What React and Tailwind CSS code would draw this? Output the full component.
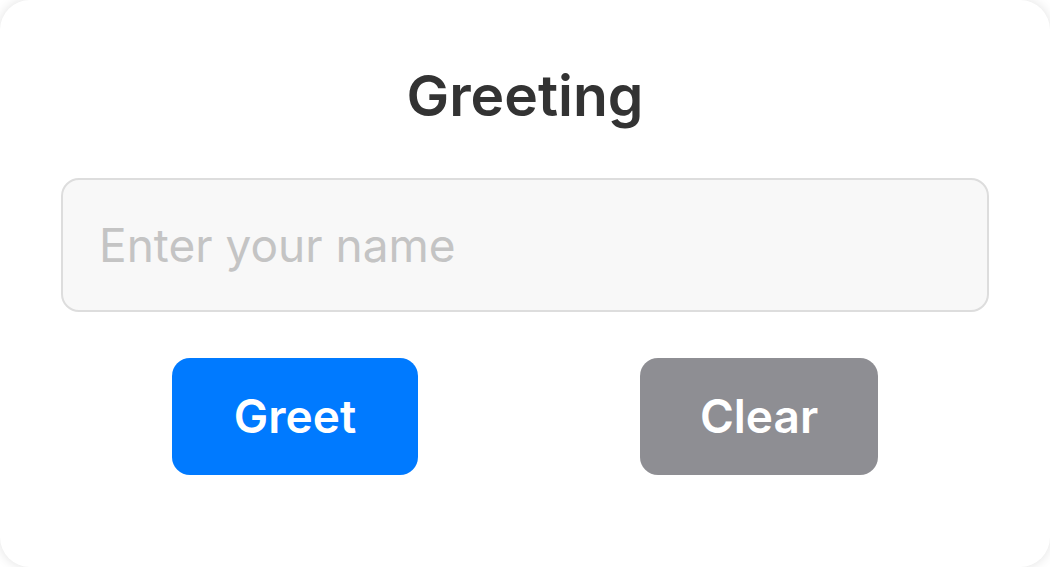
export default function App() {
  return (
    <div className="w-[1050px] h-[567px] bg-white overflow-hidden" style={{ fontFamily: 'Inter, "Noto Sans", sans-serif' }}>
      <div className="w-full h-full bg-white rounded-[30px] shadow-[0_0_12px_rgba(0,0,0,0.12)] px-[61px] pt-[62px] flex flex-col">
        <h1 className="text-center text-[57px] leading-[68px] font-semibold text-[#333333]">Greeting</h1>
        <input
          className="mt-[48px] h-[134px] w-full rounded-[18px] border-2 border-[#dddddd] bg-[#f8f8f8] px-[36px] text-[46px] text-[#333] placeholder:text-[#c4c4c4] outline-none"
          placeholder="Enter your name"
        />
        <div className="mt-[46px] flex justify-around">
          <button className="h-[117px] px-[62px] rounded-[18px] bg-[#007AFF] text-white text-[46px] font-semibold">Greet</button>
          <button className="h-[117px] px-[60px] rounded-[18px] bg-[#8E8E93] text-white text-[46px] font-semibold">Clear</button>
        </div>
      </div>
    </div>
  );
}
